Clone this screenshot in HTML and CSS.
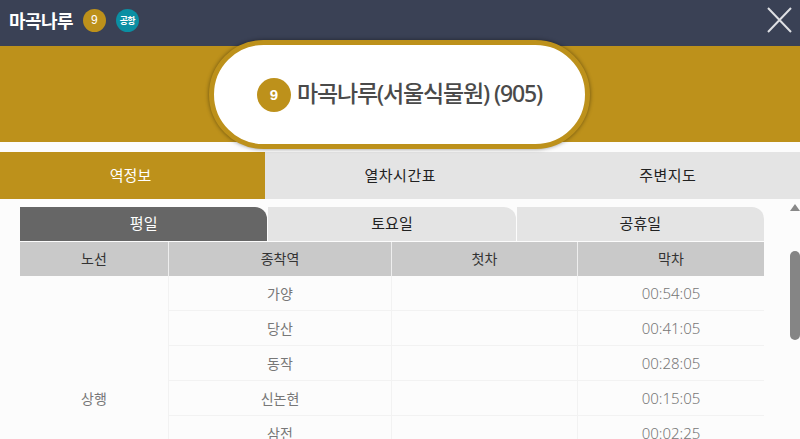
FILE: index.html
```html
<!DOCTYPE html>
<html lang="ko">
  <head>
    <meta charset="UTF-8" />
    <title>마곡나루</title>
    <link rel="stylesheet" href="styles.css">
  </head>
  <body>
    <div class="popup">
      <header class="top-bar">
        <h1 class="top-title">마곡나루</h1>
        <span class="line-badge">9</span>
        <span class="airport-badge">공항</span>
        <svg class="close-icon" width="26" height="26" viewBox="0 0 26 26">
          <path d="M2 1 L25 25 M25 1 L2 25" stroke="#dfe0e4" stroke-width="2" fill="none" />
        </svg>
      </header>
      <div class="gold-band">
        <div class="station-pill">
          <span class="pill-badge">9</span>
          <span class="pill-name">마곡나루(서울식물원) (905)</span>
        </div>
      </div>
      <nav class="main-tabs">
        <a class="main-tab active">역정보</a>
        <a class="main-tab">열차시간표</a>
        <a class="main-tab">주변지도</a>
      </nav>
      <div class="content">
        <div class="schedule">
          <div class="day-tabs">
            <a class="day-tab active">평일</a>
            <a class="day-tab">토요일</a>
            <a class="day-tab">공휴일</a>
          </div>
          <table class="time-table">
            <thead>
              <tr>
                <th class="col-line">노선</th>
                <th class="col-end">종착역</th>
                <th class="col-first">첫차</th>
                <th>막차</th>
              </tr>
            </thead>
            <tbody>
              <tr><td rowspan="7">상행</td><td>가양</td><td></td><td class="time">00:54:05</td></tr>
              <tr><td>당산</td><td></td><td class="time">00:41:05</td></tr>
              <tr><td>동작</td><td></td><td class="time">00:28:05</td></tr>
              <tr><td>신논현</td><td></td><td class="time">00:15:05</td></tr>
              <tr><td>삼전</td><td></td><td class="time">00:02:25</td></tr>
              <tr><td></td><td></td><td></td></tr>
              <tr><td></td><td></td><td></td></tr>
            </tbody>
          </table>
        </div>
        <div class="scrollbar">
          <span class="scroll-arrow"></span>
          <span class="scroll-thumb"></span>
        </div>
      </div>
    </div>
  </body>
</html>
```

FILE: styles.css
```css
html,
body {
  margin: 0;
  height: 100%;
  overflow: hidden;
}
body {
  font-family: "Noto Sans", "Noto Sans CJK KR", sans-serif;
  background-color: #fff;
  color: #333;
}
.popup {
  display: flex;
  flex-direction: column;
  height: 439px;
  overflow: hidden;
  background-color: #fcfcfc;
}
.top-bar {
  display: flex;
  align-items: center;
  height: 46px;
  padding: 0 8px 6px 9px;
  box-sizing: border-box;
  background-color: #3a4155;
  flex-shrink: 0;
}
.top-title {
  margin: 0;
  font-size: 18px;
  font-weight: 700;
  letter-spacing: -0.6px;
  color: #fff;
}
.line-badge,
.airport-badge {
  display: flex;
  justify-content: center;
  align-items: center;
  width: 23px;
  height: 23px;
  border-radius: 50%;
  color: #fff;
}
.line-badge {
  margin-left: 10px;
  background-color: #bd911b;
  font-family: "Liberation Sans", sans-serif;
  font-size: 12px;
}
.airport-badge {
  margin-left: 10px;
  background-color: #0b8fa3;
  font-size: 9px;
  font-weight: 700;
  letter-spacing: -0.6px;
}
.close-icon {
  margin-left: auto;
}
.gold-band {
  position: relative;
  height: 96px;
  background-color: #bd911b;
  flex-shrink: 0;
}
.station-pill {
  position: absolute;
  left: 209px;
  top: -6px;
  display: flex;
  justify-content: center;
  align-items: center;
  gap: 6px;
  width: 381px;
  height: 109px;
  box-sizing: border-box;
  border: 5px solid #bd911b;
  border-radius: 55px;
  background-color: #fff;
  box-shadow: 0 0 4px rgba(0, 0, 0, 0.45);
}
.pill-badge {
  display: flex;
  justify-content: center;
  align-items: center;
  width: 34px;
  height: 34px;
  border-radius: 50%;
  background-color: #bd911b;
  color: #fff;
  font-family: "Liberation Sans", sans-serif;
  font-size: 15px;
  font-weight: 700;
}
.pill-name {
  position: relative;
  top: -3px;
  font-size: 23px;
  font-weight: 500;
  letter-spacing: -1.15px;
  color: #4a4a4a;
}
.main-tabs {
  display: flex;
  height: 47px;
  margin-top: 10px;
  background-color: #e4e4e4;
  flex-shrink: 0;
}
.main-tab {
  display: flex;
  flex: 1;
  justify-content: center;
  align-items: center;
  padding: 0 0 2px 3px;
  font-size: 15px;
  letter-spacing: 0.5px;
  color: #222;
}
.main-tab.active {
  flex: 0 0 265px;
  padding: 0 4px 2px 0;
  box-sizing: border-box;
  letter-spacing: 0;
  background-color: #bd911b;
  color: #fff;
}
.content {
  display: flex;
  flex: 1;
  min-height: 0;
  overflow: hidden;
}
.schedule {
  width: 744px;
  margin: 8px 0 0 20px;
}
.day-tabs {
  display: flex;
  gap: 1px;
  height: 34px;
}
.day-tab {
  display: flex;
  flex: 1;
  justify-content: center;
  align-items: center;
  padding-bottom: 3px;
  border-radius: 0 12px 0 0;
  background-color: #e4e4e4;
  font-size: 15px;
  color: #222;
}
.day-tab.active {
  background-color: #666;
  color: #fff;
}
.time-table {
  width: 100%;
  margin-top: 1px;
  border-collapse: collapse;
  table-layout: fixed;
  font-size: 14px;
}
.time-table th {
  height: 32px;
  padding: 0 0 2px;
  border-left: 1px solid #eee;
  background-color: #c9c9c9;
  font-weight: 400;
  color: #333;
}
.time-table th:first-child {
  border-left: none;
}
.time-table td {
  height: 34px;
  padding: 0;
  border: 1px solid #f2f2f2;
  border-top: none;
  text-align: center;
  color: #777;
}
.time-table td:last-child {
  border-right: none;
}
.time-table td[rowspan] {
  border-left: none;
}
.time-table .time {
  font-size: 15px;
  font-weight: 300;
}
.col-line {
  width: 148px;
}
.col-end {
  width: 222px;
}
.col-first {
  width: 185px;
}
.scrollbar {
  display: flex;
  flex-direction: column;
  align-items: center;
  width: 10px;
  margin-left: auto;
  padding-top: 5px;
}
.scroll-arrow {
  width: 0;
  height: 0;
  border-left: 5px solid transparent;
  border-right: 5px solid transparent;
  border-bottom: 7px solid #888;
}
.scroll-thumb {
  width: 10px;
  height: 89px;
  margin-top: 40px;
  border-radius: 5px;
  background-color: #858585;
}
```
